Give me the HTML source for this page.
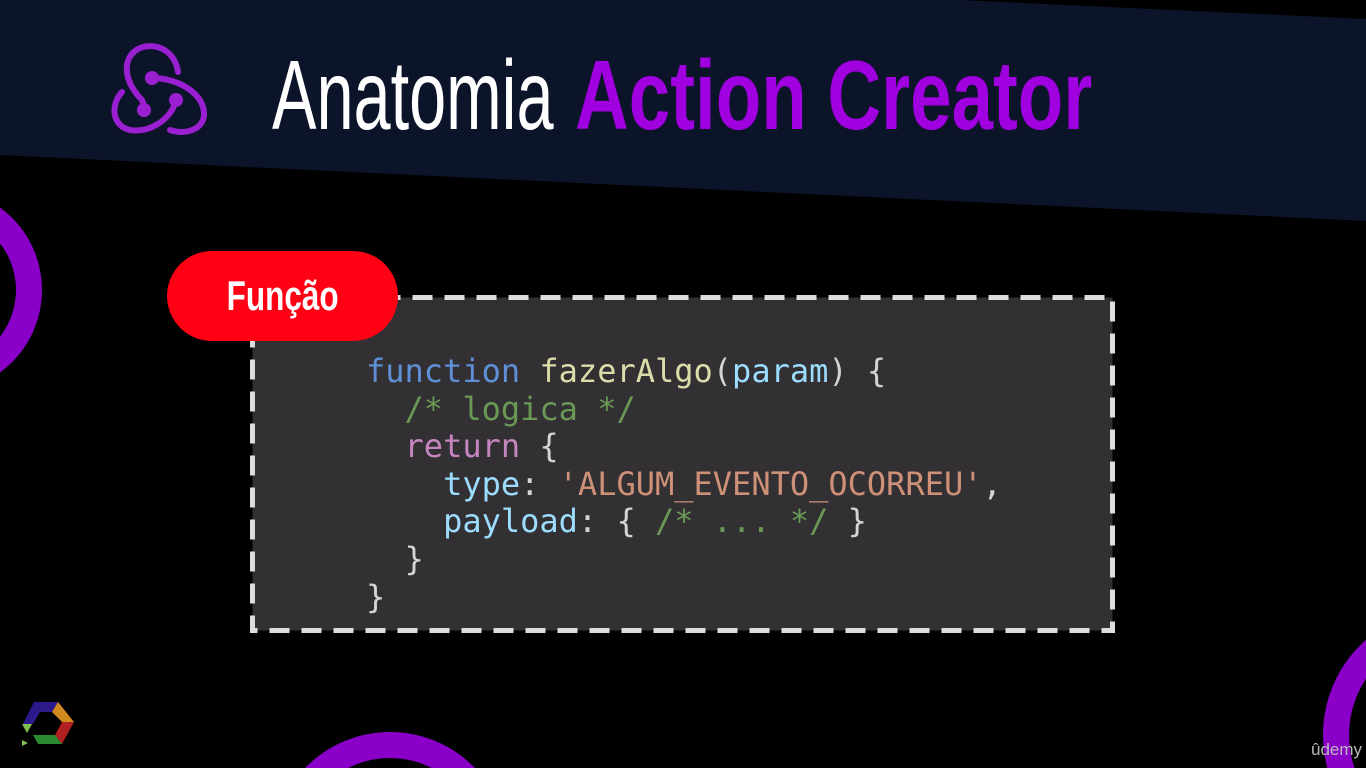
<!DOCTYPE html>
<html><head><meta charset="utf-8"><style>
html,body{margin:0;padding:0;background:#000;width:1366px;height:768px;overflow:hidden;position:relative;font-family:"Liberation Sans",sans-serif}
.abs{position:absolute}
.t{position:absolute;top:40px;white-space:nowrap;font-family:"Liberation Sans Narrow","Liberation Sans",sans-serif;font-size:98px;line-height:110px;transform-origin:0 0}
.code{position:absolute;left:366px;top:353px;font-family:"DejaVu Sans Mono",monospace;font-size:32px;line-height:37.6px;color:#d4d4d4;white-space:pre}
.k{color:#5f8fd6}.f{color:#dcdcaa}.p{color:#9cdcfe}.c{color:#6a9955}.r{color:#c586c0}.s{color:#ce9178}
</style></head><body>
<svg class="abs" style="left:0;top:0" width="1366" height="768">
<polygon points="0,0 960,0 1366,19 1366,221 0,155" fill="#0b1428"/>
<circle cx="-60" cy="290" r="89" fill="none" stroke="#8a00c8" stroke-width="26"/>
<circle cx="390" cy="850" r="105" fill="none" stroke="#8a00c8" stroke-width="26"/>
<circle cx="1450" cy="735" r="114" fill="none" stroke="#8a00c8" stroke-width="26"/>
<g fill="none" stroke="#9a1fd0" stroke-width="6" stroke-linecap="round">
<path d="M178,72 C175,50 155,42 140,48 C122,56 122,80 142,100 L145,108"/>
<path d="M152,78 C180,78 205,95 204,115 C203,130 185,135 170,130"/>
<path d="M176,101 C170,120 150,133 130,130 C112,126 110,105 122,92"/>
</g>
<g fill="#9a1fd0"><circle cx="152" cy="78" r="7"/><circle cx="176" cy="100" r="7"/><circle cx="144" cy="110" r="7"/></g>
<rect x="252.5" y="297.5" width="860" height="333" fill="#323033" stroke="#ddd" stroke-width="5" stroke-dasharray="20,12"/>
<rect x="167" y="251" width="231" height="90" rx="45" fill="#ff0015"/>
<g>
<polygon points="34,702 58,702 52,712 40,712 33,724 23,724" fill="#2a1a8a"/>
<polygon points="58,702 74,722 62,722 52,712" fill="#d08a20"/>
<polygon points="74,722 62,744 55,735 62,722" fill="#b02020"/>
<polygon points="33,735 55,735 62,744 38,744" fill="#2a8a30"/>
<polygon points="22,724 32,724 27,733" fill="#80c050"/>
<polygon points="22,740 28,743 22,746" fill="#80c050"/>
</g>
</svg>
<div class="t" style="left:272px;color:#fff;transform:scaleX(0.68);font-weight:300">Anatomia</div>
<div class="t" style="left:575px;color:#a000e0;font-weight:bold;transform:scaleX(0.76)">Action Creator</div>
<div class="abs" style="left:167px;top:271px;width:231px;text-align:center;color:#fff;font-family:'Liberation Sans Narrow','Liberation Sans',sans-serif;font-weight:bold;font-size:42px;line-height:50px"><span style="display:inline-block;transform:scaleX(0.75)">Função</span></div>
<div class="code"><span class="k">function</span> <span class="f">fazerAlgo</span>(<span class="p">param</span>) {
  <span class="c">/* logica */</span>
  <span class="r">return</span> {
    <span class="p">type</span>: <span class="s">'ALGUM_EVENTO_OCORREU'</span>,
    <span class="p">payload</span>: { <span class="c">/* ... */</span> }
  }
}</div>
<div class="abs" style="left:1311px;top:740px;color:#bbb;font-size:17px;line-height:20px">ûdemy</div>
</body></html>
